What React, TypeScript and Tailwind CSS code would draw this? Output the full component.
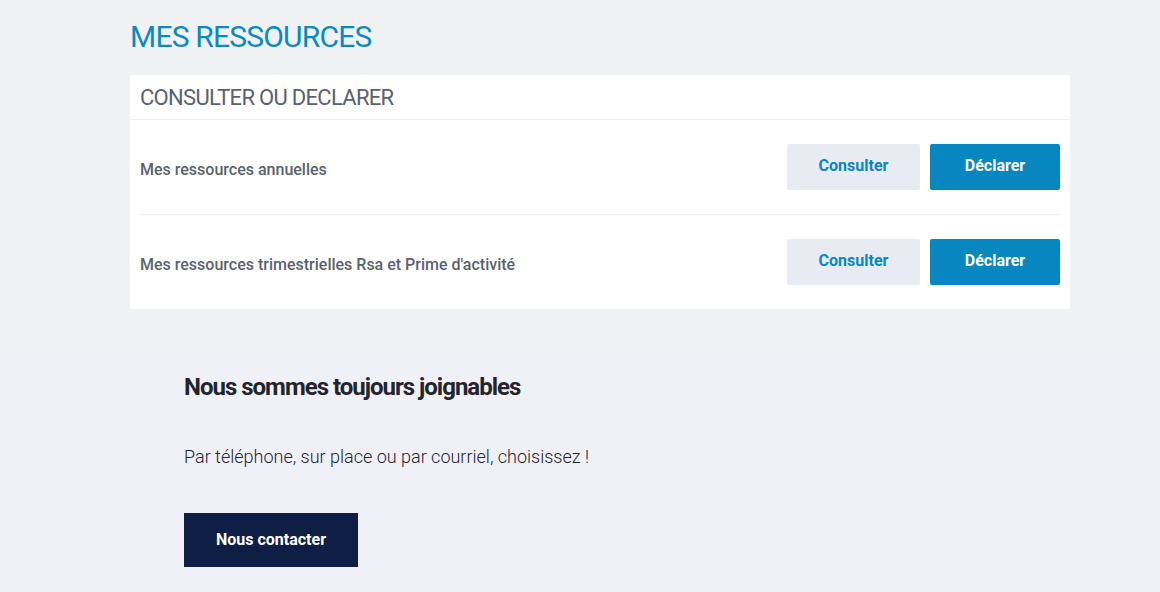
const rows = [
  "Mes ressources annuelles",
  "Mes ressources trimestrielles Rsa et Prime d'activité",
];

const ResourceRow = ({ label, last }: { label: string; last: boolean }) => (
  <div className={"mx-[10px] flex items-center justify-between py-[24px] " + (last ? "" : "border-b border-[#eceef1]")}>
    <span className="pt-[6px] text-[16px] font-medium text-[#5a626e]">{label}</span>
    <div className="flex gap-[10px]">
      <button className="h-[46px] w-[133px] rounded-[2px] bg-[#e8ebf2] pb-[2px] text-[16px] font-bold text-[#0a87bf]">
        Consulter
      </button>
      <button className="h-[46px] w-[130px] rounded-[2px] bg-[#0787bf] pb-[2px] text-[16px] font-bold text-white">
        Déclarer
      </button>
    </div>
  </div>
);

export default function App() {
  return (
    <div className="min-h-[592px] bg-[#f0f0f8] font-['Roboto',sans-serif]">
      <section className="bg-[#f0f1f3] pt-[21px] pb-[41px]">
        <div className="ml-[130px] w-[940px]">
          <h1 className="mb-[22px] text-[30px] leading-[32px] tracking-[-0.8px] text-[#0a8ac2]">
            MES RESSOURCES
          </h1>
          <div className="bg-white">
            <div className="h-[45px] border-b border-[#eceef1] px-[10px] pt-[12px]">
              <h2 className="text-[22px] leading-[22px] tracking-[-0.7px] text-[#5a626e]">
                CONSULTER OU DECLARER
              </h2>
            </div>
            {rows.map((label, i) => (
              <ResourceRow key={i} label={label} last={i === rows.length - 1} />
            ))}
          </div>
        </div>
      </section>
      <section className="px-[184px] pt-[23px] pb-[25px]">
        <h3 className="text-[24px] font-bold leading-[28px] tracking-[-1px] text-[#23252b]">
          Nous sommes toujours joignables
        </h3>
        <p className="mt-[44px] text-[18px] font-light leading-[24px] text-[#23252b]">
          Par téléphone, sur place ou par courriel, choisissez !
        </p>
        <button className="mt-[44px] h-[54px] w-[174px] bg-[#0f1e45] text-[16px] font-bold text-white">
          Nous contacter
        </button>
      </section>
    </div>
  );
}
